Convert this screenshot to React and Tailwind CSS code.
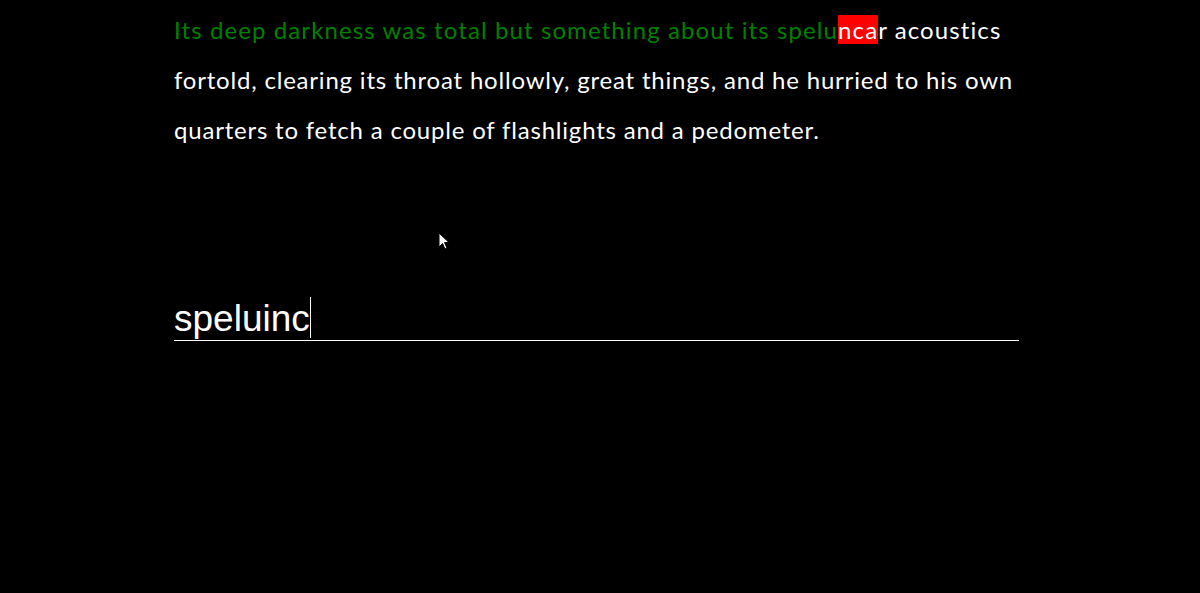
export default function App() {
  return (
    <div className="relative min-h-[593px] w-full bg-black">
      <div className="ml-[174px] w-[845px] pt-[5px]">
        {/* Prompt text */}
        <p className="font-['Lato',sans-serif] text-[24px] leading-[50px] tracking-[0.8px] text-white">
          <span className="tracking-[1.1px]">
            <span className="text-[#008000]">Its deep darkness was total but something about its spelu</span>
            <span className="bg-[#ff0000]">nca</span>
            r acoustics
          </span>{" "}
          fortold, clearing its throat hollowly, great things, and he hurried to his own quarters to fetch a couple of flashlights and a pedometer.
        </p>

        {/* Typing input */}
        <div className="mt-[142px] flex h-[44px] items-end border-b border-white">
          <span className="font-['Liberation_Sans',Arial,sans-serif] text-[37px] leading-[42px] text-white">speluinc</span>
          <span className="mb-[2px] h-[41px] w-px bg-white" />
        </div>
      </div>

      {/* Mouse pointer */}
      <svg className="absolute left-[438px] top-[232px]" width="12" height="19" viewBox="0 0 12 19">
        <path d="M1 1 L1 15 L4.5 11.5 L7 17 L9 16 L6.5 10.5 L11 10.5 Z" fill="white" stroke="black" strokeWidth="1" />
      </svg>
    </div>
  );
}
